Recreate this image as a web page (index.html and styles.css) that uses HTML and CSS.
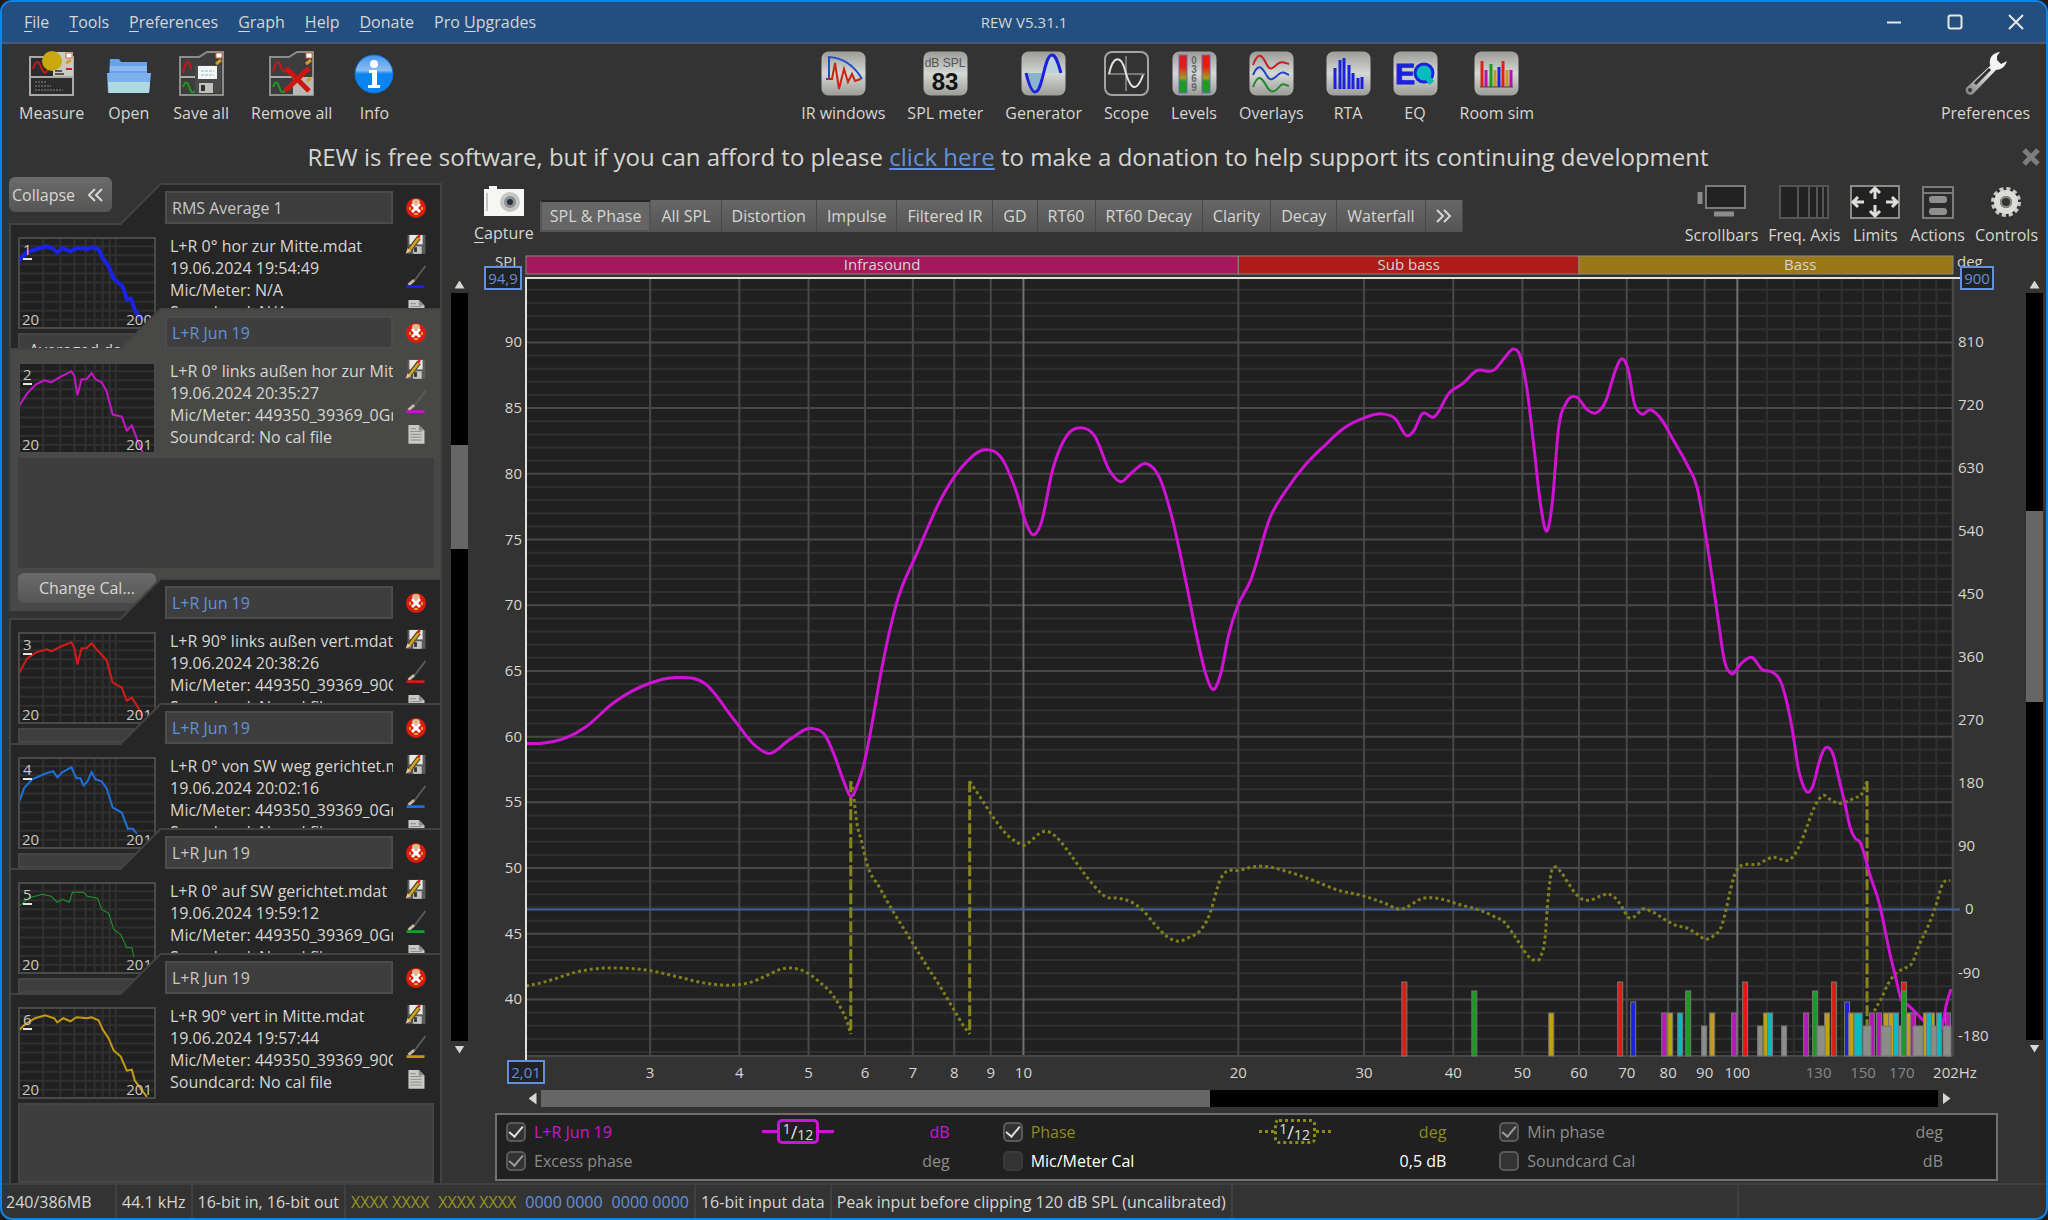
FILE: index.html
```html
<!DOCTYPE html>
<html lang="en">
  <head>
    <meta charset="UTF-8" />
    <meta name="viewport" content="width=device-width, initial-scale=1.0" />
    <title>REW V5.31.1</title>
    <link rel="stylesheet" href="styles.css">
  </head>
  <body>
    <!-- Shared icon shapes -->
    <svg class="defs" aria-hidden="true">
      <defs>
        <linearGradient id="silver" x1="0" y1="0" x2="0" y2="1">
          <stop offset="0" stop-color="#9c9c98" />
          <stop offset="0.5" stop-color="#d4d8d3" />
          <stop offset="1" stop-color="#9c9c98" />
        </linearGradient>
        <linearGradient id="level" x1="0" y1="0" x2="0" y2="1">
          <stop offset="0.3" stop-color="#e31c12" />
          <stop offset="0.6" stop-color="#a89a20" />
          <stop offset="0.7" stop-color="#1f9a20" />
        </linearGradient>
        <linearGradient id="infoBlue" x1="0" y1="0" x2="0" y2="1">
          <stop offset="0" stop-color="#3f95ee" />
          <stop offset="0.4" stop-color="#8fbcf2" />
          <stop offset="0.5" stop-color="#0a84f0" />
        </linearGradient>
        <linearGradient id="metal" x1="1" y1="0" x2="0" y2="1">
          <stop offset="0" stop-color="#ffffff" />
          <stop offset="1" stop-color="#7c7c7a" />
        </linearGradient>
      </defs>
      <symbol id="tile" viewBox="0 0 45 45">
        <rect x="0.5" y="0.5" width="44" height="44" rx="7" fill="url(#silver)" />
      </symbol>
      <symbol id="thumb-grid" viewBox="0 0 137 91">
        <path d="M25 0V91M42 0V91M56 0V91M67 0V91M76 0V91M84 0V91M91 0V91M97 0V91M0 9H137M0 18H137M0 27H137M0 36H137M0 45H137M0 55H137M0 64H137M0 73H137M0 82H137" fill="none" stroke="#303030" stroke-width="2" />
      </symbol>
      <symbol id="i-remove" viewBox="0 0 22 22">
        <circle cx="11" cy="11" r="10" fill="#dc1c12" />
        <ellipse cx="11" cy="5" rx="4" ry="3" fill="#e0b98c" />
        <path d="M9 17h4M5 10v3M17 10v3" stroke="#d8a81c" stroke-width="2" />
        <path d="M7 7l8 8M15 7l-8 8" stroke="#fff" stroke-width="3" />
      </symbol>
      <symbol id="i-save" viewBox="0 0 22 22">
        <rect x="2" y="1" width="19" height="20" fill="#5c5c5c" />
        <rect x="4" y="1" width="14" height="10" fill="#e8e8e6" />
        <rect x="8" y="13" width="9" height="8" fill="#c4c4c2" />
        <rect x="9" y="14" width="3" height="5" fill="#333" />
        <path d="M4 17L14 4" stroke="#3b3b2b" stroke-width="5" />
        <path d="M4 17L14 4" stroke="#d0a01c" stroke-width="3" />
        <path d="M0 21l2-6 4 3z" fill="#e6c49a" />
        <path d="M13 4l2-3" stroke="#d8261c" stroke-width="3" />
      </symbol>
      <symbol id="i-brush" viewBox="0 0 22 26">
        <path d="M21 1L9 17" stroke="#5c5c5c" stroke-width="2" />
        <path d="M9 16l-6 5" stroke="#c8b9a4" stroke-width="3" />
        <path d="M1 23H20" stroke="currentColor" stroke-width="3" />
      </symbol>
      <symbol id="i-file" viewBox="0 0 22 22">
        <path d="M3 1H14L20 7V21H3z" fill="#c9c9c7" />
        <path d="M14 1V7H20" fill="#8c8c8a" />
        <path d="M5 5h6M5 8h12M5 11h12M5 14h12M5 17h12" stroke="#8b8b89" />
      </symbol>
    </svg>

    <div class="window">
      <header class="title-bar">
        <nav class="menu">
          <button type="button"><u>F</u>ile</button>
          <button type="button"><u>T</u>ools</button>
          <button type="button"><u>P</u>references</button>
          <button type="button"><u>G</u>raph</button>
          <button type="button"><u>H</u>elp</button>
          <button type="button"><u>D</u>onate</button>
          <button type="button">Pro <u>U</u>pgrades</button>
        </nav>
        <h1>REW V5.31.1</h1>
        <div class="window-buttons">
          <button type="button" aria-label="Minimise">
            <svg width="16" height="16"><path d="M1 8.5H15" /></svg>
          </button>
          <button type="button" aria-label="Maximise">
            <svg width="16" height="16"><rect x="1.5" y="1.5" width="13" height="13" rx="2" /></svg>
          </button>
          <button type="button" aria-label="Close">
            <svg width="16" height="16"><path d="M1 1L15 15M15 1L1 15" /></svg>
          </button>
        </div>
      </header>

      <div class="toolbar">
        <div class="tool-group">
          <button class="tool" type="button">
            <svg width="45" height="45" viewBox="0 0 45 45">
              <rect x="1" y="6" width="43" height="38" fill="#2b2b2b" stroke="#a9a9a5" stroke-width="2" />
              <path d="M24 1H44V26H24z" fill="#c9c9c5" />
              <path d="M1 26H44" stroke="#a9a9a5" stroke-width="2" />
              <path d="M4 18C7 8 10 10 12 16S17 24 19 18" fill="none" stroke="#c41a1a" stroke-width="2" />
              <circle cx="23" cy="10" r="10" fill="#c9a80f" />
              <rect x="37" y="2" width="6" height="5" fill="#fff" stroke="#c86a50" />
              <path d="M37 12l5-3" stroke="#d0a01c" stroke-width="3" />
              <path d="M37 18h6" stroke="#d01c1c" stroke-width="2" />
              <path d="M26 20h7M26 23h9" stroke="#555" stroke-width="2" />
              <path d="M6 31h11M6 35h16M6 39h28" stroke="#8b8b8b" stroke-dasharray="2 1" />
            </svg>
            <span>Measure</span>
          </button>
          <button class="tool" type="button">
            <svg width="45" height="45" viewBox="0 0 45 45">
              <path d="M4 8H13L15 11H41V26H3z" fill="#66a3ee" />
              <path d="M4 15H41V20H4z" fill="#8fb9ee" />
              <path d="M1 22H45L43 42H2z" fill="#7fb0ee" />
              <path d="M2 31H44L43 42H3z" fill="#aedadf" />
            </svg>
            <span>Open</span>
          </button>
          <button class="tool" type="button">
            <svg width="45" height="45" viewBox="0 0 45 45">
              <path d="M1 6H20L28 1H44V44H1z" fill="#3d3d3d" stroke="#8d8d89" stroke-width="2" />
              <path d="M1 26H22" stroke="#a9a9a5" stroke-width="2" />
              <path d="M4 22C7 8 10 8 12 18" fill="none" stroke="#c41a1a" stroke-width="2" />
              <path d="M4 36C7 28 9 32 11 38S14 40 16 41" fill="none" stroke="#1f9a20" stroke-width="2" />
              <rect x="37" y="2" width="6" height="5" fill="#fff" stroke="#c86a50" />
              <path d="M37 13l5-4" stroke="#d0a01c" stroke-width="3" />
              <rect x="16" y="14" width="26" height="28" rx="2" fill="#4a4a4a" />
              <rect x="19" y="15" width="19" height="13" fill="#f4f6f6" />
              <path d="M22 20h13M22 24h13" stroke="#86b8c0" stroke-dasharray="3 1" />
              <rect x="20" y="32" width="14" height="10" fill="#c0c0bc" />
              <rect x="22" y="34" width="4" height="6" fill="#333" />
            </svg>
            <span>Save all</span>
          </button>
          <button class="tool" type="button">
            <svg width="45" height="45" viewBox="0 0 45 45">
              <path d="M1 6H20L28 1H44V44H1z" fill="#3d3d3d" stroke="#8d8d89" stroke-width="2" />
              <path d="M24 26H44V44H24z" fill="#b9b9b5" />
              <path d="M1 26H24" stroke="#a9a9a5" stroke-width="2" />
              <path d="M4 20C7 8 10 10 12 16S17 22 20 18" fill="none" stroke="#c41a1a" stroke-width="2" />
              <path d="M4 36C7 28 9 32 11 38S15 40 18 38" fill="none" stroke="#1f9a20" stroke-width="2" />
              <rect x="37" y="2" width="6" height="5" fill="#fff" stroke="#c86a50" />
              <path d="M37 13l5-4M38 30l4-3" stroke="#d0a01c" stroke-width="3" />
              <path d="M17 17L40 40M40 17L16 40" stroke="#cc1612" stroke-width="5" />
            </svg>
            <span>Remove all</span>
          </button>
          <button class="tool" type="button">
            <svg width="40" height="45" viewBox="0 0 40 45">
              <ellipse cx="20" cy="23" rx="19" ry="19" fill="url(#infoBlue)" stroke="#0a72d8" />
              <circle cx="20" cy="13" r="4" fill="#fff" />
              <path d="M15 19H23V34H26V37H14V34H18V22H15z" fill="#fff" />
            </svg>
            <span>Info</span>
          </button>
        </div>

        <div class="tool-group">
          <button class="tool" type="button">
            <svg width="45" height="45" viewBox="0 0 45 45">
              <use href="#tile" />
              <path d="M5 28H8V6C24 7 34 16 41 28" fill="none" stroke="#2050c8" stroke-width="2" />
              <path d="M6 28h5L14 12l4 26 5-20 4 13 4-8 3 7 6-2" fill="none" stroke="#cc2414" stroke-width="2" />
            </svg>
            <span>IR windows</span>
          </button>
          <button class="tool" type="button">
            <svg width="45" height="45" viewBox="0 0 45 45">
              <use href="#tile" />
              <text class="meter-unit" x="22" y="16">dB SPL</text>
              <text class="meter-value" x="22" y="39">83</text>
            </svg>
            <span>SPL meter</span>
          </button>
          <button class="tool" type="button">
            <svg width="45" height="45" viewBox="0 0 45 45">
              <use href="#tile" />
              <path d="M5 22H21C17 46 11 46 5 22z" fill="#8ab4cc" />
              <path d="M23 22H40C36 -2 28 -2 23 22z" fill="#bcd2dc" />
              <path d="M5 22C8 34 11 41 14 41C22 41 23 4 31 4C35 4 37 12 40 22" fill="none" stroke="#1a22dc" stroke-width="3" />
            </svg>
            <span>Generator</span>
          </button>
          <button class="tool" type="button">
            <svg width="45" height="45" viewBox="0 0 45 45">
              <rect x="1" y="1" width="43" height="43" rx="7" fill="#333" stroke="#a4a4a0" stroke-width="2" />
              <path d="M4 23H41M22 5V40" stroke="#777" stroke-width="2" />
              <path d="M5 23C9 4 17 4 21 19S31 46 39 24" fill="none" stroke="#e2e2de" stroke-width="2" />
            </svg>
            <span>Scope</span>
          </button>
          <button class="tool" type="button">
            <svg width="45" height="45" viewBox="0 0 45 45">
              <use href="#tile" />
              <rect x="7" y="4" width="8" height="38" fill="url(#level)" stroke="#6a6ac0" />
              <rect x="30" y="4" width="8" height="38" fill="url(#level)" stroke="#6a6ac0" />
              <text class="level-digit" x="22" y="13">0</text>
              <text class="level-digit" x="22" y="22">3</text>
              <text class="level-digit" x="22" y="31">6</text>
              <text class="level-digit" x="22" y="40">9</text>
            </svg>
            <span>Levels</span>
          </button>
          <button class="tool" type="button">
            <svg width="45" height="45" viewBox="0 0 45 45">
              <use href="#tile" />
              <g fill="none" stroke-width="2">
                <path d="M4 14C10 -2 14 6 18 14S26 14 30 12S36 12 40 13" stroke="#c02222" />
                <path d="M4 24C10 10 14 18 18 25S26 26 30 23S36 22 40 24" stroke="#2444c8" />
                <path d="M4 36C10 20 14 29 18 36S26 41 30 36S36 34 40 35" stroke="#1f8a2a" />
              </g>
            </svg>
            <span>Overlays</span>
          </button>
          <button class="tool" type="button">
            <svg width="45" height="45" viewBox="0 0 45 45">
              <use href="#tile" />
              <path d="M9 38V17M14 38V9M18 38V7M23 38V14M27 38V22M32 38V27M36 38V26" stroke="#1a22dc" stroke-width="3" />
            </svg>
            <span>RTA</span>
          </button>
          <button class="tool" type="button">
            <svg width="45" height="45" viewBox="0 0 45 45">
              <use href="#tile" />
              <text class="eq-letter" x="2" y="33">E</text>
              <circle cx="31" cy="22" r="9" fill="#06bcbc" stroke="#1a22dc" stroke-width="3" />
              <path d="M32 24L39 32" stroke="#06bcbc" stroke-width="6" />
            </svg>
            <span>EQ</span>
          </button>
          <button class="tool" type="button">
            <svg width="45" height="45" viewBox="0 0 45 45">
              <use href="#tile" />
              <g stroke-width="3">
                <path d="M8 36V10M29 36V10" stroke="#dc2214" />
                <path d="M12 36V19M37 36V19" stroke="#b012b4" />
                <path d="M17 36V13" stroke="#1f9a20" />
                <path d="M21 36V19M33 36V19" stroke="#c49a1c" />
                <path d="M25 36V16" stroke="#1a22dc" />
              </g>
              <path d="M6 36H39" stroke="#444" />
            </svg>
            <span>Room sim</span>
          </button>
        </div>

        <button class="tool" type="button">
          <svg width="45" height="45" viewBox="0 0 45 45">
            <path d="M28 14L33 19L11 42C8 46 1 43 3 37z" fill="url(#metal)" />
            <path d="M12 33L27 18" stroke="#2e2e2e" stroke-width="3" />
            <circle cx="7" cy="39" r="2" fill="#333" />
            <path d="M37 1C29 2 26 7 27 14L32 19C38 19 42 16 44 10L38 13L34 9L34 5z" fill="#f4f4f2" />
          </svg>
          <span>Preferences</span>
        </button>
      </div>

      <div class="donation">
        <p>REW is free software, but if you can afford to please <a href="#donate">click here</a> to make a donation to help support its continuing development</p>
        <button type="button" aria-label="Dismiss">
          <svg width="18" height="18"><path d="M2 2L16 16M16 2L2 16" stroke="#7d7d7b" stroke-width="5" /></svg>
        </button>
      </div>

      <div class="workspace">
        <aside class="measurements">
          <button class="collapse" type="button">
            Collapse
            <svg width="16" height="14"><path d="M8 1L2 7L8 13M15 1L9 7L15 13" /></svg>
          </button>

          <ul class="card-list">
            <li class="card">
              <input type="text" value="RMS Average 1" aria-label="Measurement 1 name" />
              <button class="remove" type="button" aria-label="Remove"><svg><use href="#i-remove" /></svg></button>
              <div class="thumb blue">
                <svg viewBox="0 0 137 91"><use href="#thumb-grid" /><polyline class="thick" points="1,23 9,15 18,12 28,9 34,11 39,15 44,11 52,14 58,11 66,11 69,12 73,10 80,12 84,21 90,29 95,41 104,49 108,62 112,61 117,75 124,82" /></svg>
                <b>1</b><span>20</span><span>200</span>
              </div>
              <div class="info">
                <p>L+R 0° hor zur Mitte.mdat</p>
                <p>19.06.2024 19:54:49</p>
                <p>Mic/Meter: N/A</p>
                <p>Soundcard: N/A</p>
              </div>
              <div class="card-icons blue">
                <svg><use href="#i-save" /></svg>
                <svg class="brush"><use href="#i-brush" /></svg>
                <svg><use href="#i-file" /></svg>
              </div>
              <div class="notes">Averaged data</div>
            </li>

            <li class="card selected">
              <input class="linked" type="text" value="L+R Jun 19" aria-label="Measurement 2 name" />
              <button class="remove" type="button" aria-label="Remove"><svg><use href="#i-remove" /></svg></button>
              <div class="thumb magenta">
                <svg viewBox="0 0 137 91"><use href="#thumb-grid" /><polyline points="1,44 9,31 18,22 26,18 33,20 41,15 53,9 56,14 59,33 63,17 68,17 73,11 77,17 83,20 88,29 94,52 103,54 108,68 113,63 118,76 124,90" /></svg>
                <b>2</b><span>20</span><span>201</span>
              </div>
              <div class="info">
                <p>L+R 0° links außen hor zur Mitte.mdat</p>
                <p>19.06.2024 20:35:27</p>
                <p>Mic/Meter: 449350_39369_0Grad</p>
                <p>Soundcard: No cal file</p>
              </div>
              <div class="card-icons magenta">
                <svg><use href="#i-save" /></svg>
                <svg class="brush"><use href="#i-brush" /></svg>
                <svg><use href="#i-file" /></svg>
              </div>
              <div class="notes"></div>
              <button class="change-cal" type="button">Change Cal...</button>
            </li>

            <li class="card">
              <input class="linked" type="text" value="L+R Jun 19" aria-label="Measurement 3 name" />
              <button class="remove" type="button" aria-label="Remove"><svg><use href="#i-remove" /></svg></button>
              <div class="thumb red">
                <svg viewBox="0 0 137 91"><use href="#thumb-grid" /><polyline points="1,41 9,26 18,20 29,17 33,19 43,14 53,10 56,16 59,32 63,16 68,16 73,11 78,17 88,28 94,50 103,55 108,68 113,65 120,76 123,83" /></svg>
                <b>3</b><span>20</span><span>201</span>
              </div>
              <div class="info">
                <p>L+R 90° links außen vert.mdat</p>
                <p>19.06.2024 20:38:26</p>
                <p>Mic/Meter: 449350_39369_90Grad</p>
                <p>Soundcard: No cal file</p>
              </div>
              <div class="card-icons red">
                <svg><use href="#i-save" /></svg>
                <svg class="brush"><use href="#i-brush" /></svg>
                <svg><use href="#i-file" /></svg>
              </div>
              <div class="notes"></div>
            </li>

            <li class="card">
              <input class="linked" type="text" value="L+R Jun 19" aria-label="Measurement 4 name" />
              <button class="remove" type="button" aria-label="Remove"><svg><use href="#i-remove" /></svg></button>
              <div class="thumb azure">
                <svg viewBox="0 0 137 91"><use href="#thumb-grid" /><polyline points="1,45 6,31 14,22 28,16 35,14 39,20 44,15 53,10 58,21 62,21 65,28 69,24 73,15 77,22 83,24 88,31 94,50 103,55 109,71 114,71 118,76" /></svg>
                <b>4</b><span>20</span><span>201</span>
              </div>
              <div class="info">
                <p>L+R 0° von SW weg gerichtet.mdat</p>
                <p>19.06.2024 20:02:16</p>
                <p>Mic/Meter: 449350_39369_0Grad</p>
                <p>Soundcard: No cal file</p>
              </div>
              <div class="card-icons azure">
                <svg><use href="#i-save" /></svg>
                <svg class="brush"><use href="#i-brush" /></svg>
                <svg><use href="#i-file" /></svg>
              </div>
              <div class="notes"></div>
            </li>

            <li class="card">
              <input type="text" value="L+R Jun 19" aria-label="Measurement 5 name" />
              <button class="remove" type="button" aria-label="Remove"><svg><use href="#i-remove" /></svg></button>
              <div class="thumb green">
                <svg viewBox="0 0 137 91"><use href="#thumb-grid" /><polyline class="thin" points="1,24 10,16 24,12 33,14 39,20 44,17 51,20 54,10 65,10 69,14 79,16 83,27 90,31 95,47 102,52 108,65 113,65 115,74" /></svg>
                <b>5</b><span>20</span><span>201</span>
              </div>
              <div class="info">
                <p>L+R 0° auf SW gerichtet.mdat</p>
                <p>19.06.2024 19:59:12</p>
                <p>Mic/Meter: 449350_39369_0Grad</p>
                <p>Soundcard: No cal file</p>
              </div>
              <div class="card-icons green">
                <svg><use href="#i-save" /></svg>
                <svg class="brush"><use href="#i-brush" /></svg>
                <svg><use href="#i-file" /></svg>
              </div>
              <div class="notes"></div>
            </li>

            <li class="card last">
              <input type="text" value="L+R Jun 19" aria-label="Measurement 6 name" />
              <button class="remove" type="button" aria-label="Remove"><svg><use href="#i-remove" /></svg></button>
              <div class="thumb yellow">
                <svg viewBox="0 0 137 91"><use href="#thumb-grid" /><polyline points="1,23 7,17 17,11 27,8 36,11 39,15 45,11 52,14 58,10 69,11 73,10 80,13 84,22 90,31 95,43 102,49 108,63 113,62 116,73 128,89" /></svg>
                <b>6</b><span>20</span><span>201</span>
              </div>
              <div class="info">
                <p>L+R 90° vert in Mitte.mdat</p>
                <p>19.06.2024 19:57:44</p>
                <p>Mic/Meter: 449350_39369_90Grad</p>
                <p>Soundcard: No cal file</p>
              </div>
              <div class="card-icons yellow">
                <svg><use href="#i-save" /></svg>
                <svg class="brush"><use href="#i-brush" /></svg>
                <svg><use href="#i-file" /></svg>
              </div>
              <div class="notes"></div>
            </li>
          </ul>
        </aside>

        <div class="scrollbar list-scroll">
          <button type="button" aria-label="Scroll list up"><i class="arrow up"></i></button>
          <div class="track">
            <div style="flex-grow: 152"></div>
            <div class="handle" style="flex-grow: 104"></div>
            <div style="flex-grow: 492"></div>
          </div>
          <button type="button" aria-label="Scroll list down"><i class="arrow down"></i></button>
        </div>

        <main class="graph">
          <div class="graph-header">
            <button class="tool capture" type="button">
              <svg width="42" height="32" viewBox="0 0 42 32">
                <path d="M1 4H6V1H14V4H41V31H1z" fill="#f6f6f4" />
                <path d="M4 8V26" stroke="#c4c4c2" stroke-width="2" />
                <circle cx="27" cy="17" r="10" fill="#c6c6c4" />
                <circle cx="27" cy="17" r="6" fill="#8b8f92" />
                <circle cx="27" cy="17" r="3" fill="#26303a" />
              </svg>
              <span><u>C</u>apture</span>
            </button>
            <div class="tabs">
              <button class="active" type="button">SPL &amp; Phase</button>
              <button type="button">All SPL</button>
              <button type="button">Distortion</button>
              <button type="button">Impulse</button>
              <button type="button">Filtered IR</button>
              <button type="button">GD</button>
              <button type="button">RT60</button>
              <button type="button">RT60 Decay</button>
              <button type="button">Clarity</button>
              <button type="button">Decay</button>
              <button type="button">Waterfall</button>
              <button type="button" aria-label="More graphs">
                <svg width="16" height="14"><path d="M1 1L7 7L1 13M8 1L14 7L8 13" /></svg>
              </button>
            </div>
            <div class="graph-tools">
              <button class="tool" type="button">
                <svg width="50" height="34" viewBox="0 0 50 34">
                  <rect x="9" y="1" width="39" height="22" fill="#222" stroke="#7b7b79" stroke-width="2" />
                  <path d="M3 7V19M17 29H37" stroke="#8b8b89" stroke-width="5" />
                </svg>
                <span>Scrollbars</span>
              </button>
              <button class="tool" type="button">
                <svg width="50" height="34" viewBox="0 0 50 34">
                  <rect x="1" y="1" width="48" height="32" fill="#222" stroke="#555" stroke-width="2" />
                  <path d="M19 1V33M30 1V33M38 1V33M44 1V33" stroke="#555" stroke-width="2" />
                </svg>
                <span>Freq. Axis</span>
              </button>
              <button class="tool" type="button">
                <svg width="50" height="34" viewBox="0 0 50 34">
                  <rect x="1" y="1" width="48" height="32" fill="#222" stroke="#8b8b89" stroke-width="2" />
                  <path d="M25 14V4M20 8L25 3L30 8M25 20V30M20 26L25 31L30 26M14 17H4M8 12L3 17L8 22M36 17H46M42 12L47 17L42 22" fill="none" stroke="#dededa" stroke-width="3" />
                </svg>
                <span>Limits</span>
              </button>
              <button class="tool" type="button">
                <svg width="32" height="34" viewBox="0 0 32 34">
                  <rect x="1" y="2" width="30" height="31" fill="#2b2b2b" stroke="#7b7b79" stroke-width="2" />
                  <path d="M1 8H31" stroke="#7b7b79" stroke-width="2" />
                  <rect x="7" y="11" width="18" height="7" rx="3" fill="#8f8f8d" />
                  <rect x="7" y="23" width="18" height="7" rx="3" fill="#8f8f8d" />
                </svg>
                <span>Actions</span>
              </button>
              <button class="tool" type="button">
                <svg width="34" height="34" viewBox="0 0 34 34">
                  <circle cx="17" cy="17" r="13" fill="none" stroke="#c9c9c5" stroke-width="4" stroke-dasharray="4 2.8" />
                  <circle cx="17" cy="17" r="9" fill="none" stroke="#dcdcd8" stroke-width="6" />
                  <circle cx="17" cy="17" r="5" fill="#333" stroke="#8b8b89" stroke-width="2" />
                </svg>
                <span>Controls</span>
              </button>
            </div>
          </div>

          <div class="plot-row">
            <svg id="plot" role="img" aria-label="SPL and phase against frequency"></svg>
            <div class="scrollbar plot-scroll">
              <button type="button" aria-label="Scroll graph up"><i class="arrow up"></i></button>
              <div class="track">
                <div style="flex-grow: 218"></div>
                <div class="handle" style="flex-grow: 191"></div>
                <div style="flex-grow: 338"></div>
              </div>
              <button type="button" aria-label="Scroll graph down"><i class="arrow down"></i></button>
            </div>
          </div>

          <div class="scrollbar horizontal">
            <button type="button" aria-label="Scroll graph left"><i class="arrow left"></i></button>
            <div class="track">
              <div class="handle" style="flex-grow: 669"></div>
              <div style="flex-grow: 728"></div>
            </div>
            <button type="button" aria-label="Scroll graph right"><i class="arrow right"></i></button>
          </div>

          <div class="legend">
            <div class="legend-item spl">
              <label><input type="checkbox" checked /> L+R Jun 19</label>
              <span class="smoothing"><span><sup>1</sup>/<sub>12</sub></span></span>
              <span class="unit">dB</span>
            </div>
            <div class="legend-item phase">
              <label><input type="checkbox" checked /> Phase</label>
              <span class="smoothing"><span><sup>1</sup>/<sub>12</sub></span></span>
              <span class="unit">deg</span>
            </div>
            <div class="legend-item off">
              <label><input type="checkbox" checked /> Min phase</label>
              <span class="unit">deg</span>
            </div>
            <div class="legend-item off">
              <label><input type="checkbox" checked /> Excess phase</label>
              <span class="unit">deg</span>
            </div>
            <div class="legend-item">
              <label><input class="plain" type="checkbox" /> Mic/Meter Cal</label>
              <span class="unit">0,5 dB</span>
            </div>
            <div class="legend-item off">
              <label><input type="checkbox" /> Soundcard Cal</label>
              <span class="unit">dB</span>
            </div>
          </div>
        </main>
      </div>

      <footer class="status">
        <span class="memory">240/386MB</span>
        <span>44.1 kHz</span>
        <span>16-bit in, 16-bit out</span>
        <span class="bits"><em>XXXX XXXX</em><em>XXXX XXXX</em><strong>0000 0000</strong><strong>0000 0000</strong></span>
        <span>16-bit input data</span>
        <span>Peak input before clipping 120 dB SPL (uncalibrated)</span>
        <span class="wide"></span>
        <span class="rest"></span>
      </footer>
    </div>

    <script src="script.js"></script>
  </body>
</html>
```
FILE: styles.css
```css
* {
  box-sizing: border-box;
}

body {
  margin: 0;
  background-color: #1c1c1c;
  color: #d6d6d2;
  font-family: "Open Sans", "Noto Sans", sans-serif;
  font-size: 16px;
  line-height: 22px;
}

button {
  margin: 0;
  padding: 0;
  border: none;
  background: none;
  color: inherit;
  font: inherit;
  cursor: pointer;
}

u {
  text-underline-offset: 3px;
}

p,
ul,
h1 {
  margin: 0;
  padding: 0;
}

.defs {
  position: absolute;
  width: 0;
  height: 0;
}

.window {
  display: flex;
  flex-direction: column;
  height: 100vh;
  border: 2px solid #0d84e6;
  border-radius: 12px;
  background-color: #333;
  overflow: hidden;
}

/* Title bar */

.title-bar {
  display: grid;
  grid-template-columns: 1fr auto 1fr;
  align-items: center;
  height: 42px;
  flex: none;
  background-color: #234f80;
  border-bottom: 2px solid #46587a;
}

.menu {
  display: flex;
  gap: 20px;
  padding-left: 22px;
}

.title-bar h1 {
  font-size: 15px;
  font-weight: normal;
}

.window-buttons {
  display: flex;
  justify-content: flex-end;
}

.window-buttons button {
  display: flex;
  justify-content: center;
  width: 61px;
}

.window-buttons svg {
  fill: none;
  stroke: #e8e8e4;
  stroke-width: 2;
}

/* Toolbar */

.toolbar {
  display: flex;
  justify-content: space-between;
  flex: none;
  height: 87px;
  padding: 7px 16px 0 17px;
}

.tool-group {
  display: flex;
  gap: 22px;
}

.tool {
  display: flex;
  flex-direction: column;
  align-items: center;
  gap: 6px;
}

.tool svg {
  flex: none;
}

.meter-unit {
  font: 12px "Liberation Sans", sans-serif;
  fill: #555;
  text-anchor: middle;
}

.meter-value {
  font: bold 24px "Liberation Sans", sans-serif;
  fill: #111;
  text-anchor: middle;
}

.level-digit {
  font: bold 10px "Liberation Sans", sans-serif;
  fill: #666;
  text-anchor: middle;
}

.eq-letter {
  font: bold 30px "Liberation Sans", sans-serif;
  fill: #1a22dc;
  stroke: #1a22dc;
  stroke-width: 1;
}

.donation {
  display: flex;
  align-items: center;
  flex: none;
  height: 46px;
  padding: 6px 6px 0 0;
}

.donation p {
  flex: 1;
  padding-right: 8px;
  text-align: center;
  font-size: 24px;
  line-height: 36px;
}

.donation a {
  color: #6191dc;
}

.donation button {
  display: flex;
}

/* Workspace */

.workspace {
  display: flex;
  flex: 1;
  min-height: 0;
  padding: 0 3px 0 7px;
}

.measurements {
  display: flex;
  flex-direction: column;
  width: 433px;
  min-height: 0;
}

.collapse {
  position: relative;
  z-index: 1;
  display: flex;
  align-items: center;
  gap: 12px;
  flex: none;
  width: 103px;
  height: 35px;
  padding-left: 3px;
  border-radius: 6px;
  background: linear-gradient(#6b6b6b, #555);
}

.collapse svg,
.tabs svg {
  fill: none;
  stroke: #d6d6d2;
  stroke-width: 2;
}

.card-list {
  display: flex;
  flex-direction: column;
  flex: 1;
  min-height: 0;
  margin-top: -29px;
  list-style: none;
}

/* Tabbed card: every card overlaps the one above it */
.card {
  position: relative;
  display: grid;
  grid-template-columns: 147px 228px 1fr;
  grid-template-rows: 33px 91px 1fr;
  row-gap: 5px;
  flex: none;
  height: 165px;
  margin-bottom: -40px;
  padding: 8px 8px 0 9px;
  background-color: #424242;
  clip-path: polygon(0 40px, 111px 40px, 151px 0, 100% 0, 100% 100%, 0 100%);
}

.card::before {
  content: "";
  position: absolute;
  inset: 2px 2px 0 2px;
  background-color: #262626;
  clip-path: polygon(0 40px, 110px 40px, 150px 0, 100% 0, 100% 100%, 0 100%);
}

.card > * {
  position: relative;
}

.card.selected {
  grid-template-rows: 33px 91px 118px 30px;
  height: 303px;
  margin-bottom: -33px;
}

.card.selected::before {
  background-color: #484846;
}

.card.last {
  flex: 1;
  margin-bottom: 0;
}

.card input {
  grid-column: 2;
  min-width: 0;
  padding: 0 5px;
  border: 2px solid #4c4c4c;
  background-color: #3e3e3e;
  color: #c8c8c4;
  font: inherit;
}

.card input.linked {
  color: #6191dc;
}

.remove {
  display: flex;
  align-items: center;
  justify-content: center;
  padding-left: 5px;
}

.remove svg,
.card-icons svg {
  width: 22px;
  height: 22px;
}

.thumb {
  grid-column: 1;
  width: 138px;
  margin-top: 8px;
  height: 92px;
  outline: 2px solid #4a4a4a;
  outline-offset: -2px;
  background-color: #202020;
  overflow: hidden;
}

.thumb svg {
  display: block;
  width: 100%;
  height: 100%;
}

.thumb polyline {
  fill: none;
  stroke: currentColor;
  stroke-width: 2;
}

.thumb .thick {
  stroke-width: 4;
}

.thumb .thin {
  stroke-width: 1;
}

.thumb b,
.thumb span {
  position: absolute;
  color: #c8c8c4;
  font-size: 15px;
  font-weight: normal;
  line-height: 17px;
}

.thumb b {
  top: 4px;
  left: 5px;
  border-bottom: 2px solid #e4e4e0;
}

.thumb span {
  left: 4px;
  bottom: 1px;
}

.thumb span:last-child {
  left: auto;
  right: 4px;
}

.info {
  padding: 6px 0 0 5px;
  height: 96px;
  overflow: hidden;
  white-space: nowrap;
}

.card-icons {
  display: flex;
  flex-direction: column;
  align-items: center;
  gap: 10px;
  padding: 5px 0 0 5px;
}

.card-icons .brush {
  height: 26px;
}

.notes {
  grid-column: 1 / -1;
  margin-top: 8px;
  padding: 4px 9px;
  border: 2px solid #454545;
  background-color: #3e3e3e;
}

.selected .notes {
  border-color: #3e3e3e;
}

.change-cal {
  width: 138px;
  height: 30px;
  border-radius: 6px;
  background: linear-gradient(#6b6b6b, #555);
}

.blue {
  color: #1a22e4;
}

.magenta {
  color: #c416c8;
}

.red {
  color: #d01c16;
}

.azure {
  color: #1c70d8;
}

.green {
  color: #1f9a2a;
}

.yellow {
  color: #c49a12;
}

/* Scrollbars */

.scrollbar {
  display: flex;
  flex-direction: column;
  flex: none;
  width: 17px;
}

.scrollbar button {
  display: flex;
  align-items: center;
  justify-content: center;
  width: 17px;
  height: 17px;
}

.list-scroll {
  margin: 99px 8px 125px 9px;
}

.plot-scroll {
  margin: 24px 0 29px;
}

.track {
  display: flex;
  flex-direction: inherit;
  flex: 1;
  background-color: #000;
}

.handle {
  background-color: #666;
}

.arrow {
  width: 10px;
  height: 8px;
  background-color: #d6d6d2;
}

.up {
  clip-path: polygon(50% 0, 100% 100%, 0 100%);
}

.down {
  clip-path: polygon(0 0, 100% 0, 50% 100%);
}

.left,
.right {
  width: 8px;
  height: 12px;
}

.left {
  clip-path: polygon(0 50%, 100% 0, 100% 100%);
}

.right {
  clip-path: polygon(0 0, 100% 50%, 0 100%);
}

.horizontal {
  flex-direction: row;
  width: auto;
  height: 17px;
  margin: 4px 88px 6px 48px;
}

/* Graph */

.graph {
  display: flex;
  flex-direction: column;
  flex: 1;
  min-width: 0;
  min-height: 0;
}

.graph-header {
  display: flex;
  flex: none;
  height: 75px;
  padding: 8px 5px 0 0;
}

.capture {
  margin: 0 6px 0 -2px;
}

.tabs {
  display: flex;
  height: 32px;
  margin-top: 15px;
}

.tabs button {
  display: flex;
  align-items: center;
  padding: 0 10px;
  border-right: 1px solid #484848;
  background: linear-gradient(#676767, #545454);
}

.tabs button.active {
  padding: 0 8px;
  border: 2px solid #555;
  border-top-color: #222;
  background: #666;
}

.graph-tools {
  display: flex;
  gap: 10px;
  margin-left: auto;
}

.graph-tools .tool,
.graph-header .capture {
  gap: 5px;
}

.plot-row {
  display: flex;
  gap: 7px;
  flex: 1;
  min-height: 0;
}

#plot {
  flex: 1;
  min-width: 0;
  height: 100%;
}

#plot text {
  fill: #d6d6d2;
  font-size: 15px;
}

#plot .end {
  text-anchor: end;
}

#plot .middle {
  text-anchor: middle;
}

#plot .dim {
  fill: #888;
}

#plot .limit-text {
  fill: #6191dc;
}

.limit-box {
  fill: #222;
  stroke: #6191dc;
  stroke-width: 2;
}

.plot-area {
  fill: #202020;
}

.grid-minor {
  stroke: #303030;
  stroke-width: 2;
}

.grid-major {
  stroke: #484848;
  stroke-width: 2;
}

.grid-decade {
  stroke: #707070;
  stroke-width: 2;
}

.zero {
  stroke: #40609c;
  stroke-width: 2;
}

.axis {
  fill: none;
  stroke: #e0e0dc;
  stroke-width: 2;
}

.band {
  stroke: #8a8a80;
}

.trace {
  fill: none;
  stroke: #d012d4;
  stroke-width: 3;
  stroke-linejoin: round;
}

.phase-trace {
  fill: none;
  stroke: #7f7f1c;
  stroke-width: 3;
  stroke-dasharray: 3 3;
}

.phase-wrap {
  stroke: #86861a;
  stroke-width: 3;
  stroke-dasharray: 11 3;
}

.mode {
  stroke: #777;
}

/* Legend */

.legend {
  display: grid;
  grid-template-columns: repeat(3, 1fr);
  grid-template-rows: 29px 29px;
  flex: none;
  margin: 0 45px 2px 19px;
  padding: 2px 0 4px 9px;
  border: 2px solid #707070;
  background-color: #202020;
}

.legend-item {
  display: grid;
  grid-template-columns: 256px 72px 1fr;
  align-items: center;
  padding-right: 53px;
  color: #fff;
}

.legend-item label {
  display: flex;
  align-items: center;
  gap: 8px;
}

.legend-item input {
  appearance: none;
  display: grid;
  place-content: center;
  width: 20px;
  height: 20px;
  margin: 0;
  border: 2px solid #5a5a5a;
  border-radius: 5px;
  background-color: #333;
}

.legend-item .plain {
  border-color: #3a3a3a;
}

.legend-item input:checked::after {
  content: "";
  width: 6px;
  height: 12px;
  margin-bottom: 3px;
  border: solid #e0e0dc;
  border-width: 0 2px 2px 0;
  transform: rotate(40deg);
}

.spl {
  color: #d012d4;
}

.phase {
  color: #8c8c1e;
}

.off {
  color: #8c8c8c;
}

.legend-item.off input:checked::after {
  border-color: #9c9c9c;
}

.unit {
  grid-column: 3;
  text-align: right;
}

.smoothing {
  display: flex;
  align-items: center;
}

.smoothing::before,
.smoothing::after {
  content: "";
  flex: 1;
  border-top: 3px solid;
}

.smoothing span {
  display: flex;
  align-items: center;
  justify-content: center;
  width: 42px;
  height: 25px;
  border: 3px solid #d012d4;
  border-radius: 5px;
  color: #e0e0dc;
  font-size: 18px;
}

.phase .smoothing span {
  border-color: #8c8c1e;
}

.phase .smoothing::before,
.phase .smoothing::after,
.phase .smoothing span {
  border-style: dotted;
}

.phase .smoothing::before,
.phase .smoothing::after {
  border-width: 3px 0 0;
}

.smoothing sup,
.smoothing sub {
  font-size: 14px;
  line-height: 14px;
  vertical-align: baseline;
}

.smoothing sup {
  padding-bottom: 5px;
}

.smoothing sub {
  padding-top: 6px;
}

/* Status bar */

.status {
  display: flex;
  flex: none;
  height: 35px;
  border-top: 2px solid #404040;
  white-space: nowrap;
}

.status > span {
  padding: 6px 5px 0;
  border-right: 2px solid #404040;
}

.status .memory {
  width: 115px;
  padding-left: 4px;
}

.bits {
  display: flex;
  gap: 9px;
}

.bits em {
  color: #96961e;
  font-style: normal;
}

.bits strong {
  color: #6191dc;
  font-weight: normal;
}

.status .wide {
  flex: 5;
}

.status .rest {
  flex: 3;
  border-right: none;
}
```
FILE: script.js
```js
const svg = document.getElementById("plot");

// Axis limits
const FREQ = { min: 2.01, max: 200.5 };
const SPL = { min: 35.7, max: 94.9 };
const ZERO_DEG = 46.85; // SPL level that lines up with 0 degrees
const DB_PER_DEG = 0.0533;

// Recorded traces, as points on a 2048px wide screen
const AREA = { left: 526, top: 278, width: 1428, height: 779 };

const splTrace = [
  526,744, 540,744, 567,738, 585,728, 614,703, 649,684, 676,678, 705,684, 734,720, 755,746,
  769,754, 790,740, 812,729, 826,737, 835,757, 844,782, 851,797, 859,782, 866,757, 873,720,
  882,669, 897,603, 917,554, 943,496, 966,463, 985,450, 1003,460, 1016,490, 1027,525,
  1033,535, 1041,525, 1053,470, 1067,436, 1081,428, 1095,436, 1110,471, 1121,482, 1132,473,
  1147,464, 1160,478, 1172,516, 1186,580, 1199,645, 1207,677, 1213,690, 1221,675, 1229,636,
  1238,607, 1251,581, 1271,517, 1287,490, 1306,465, 1326,445, 1345,428, 1365,418, 1382,414,
  1396,419, 1408,436, 1415,430, 1422,415, 1435,417, 1450,393, 1463,384, 1477,371, 1495,370,
  1506,357, 1514,349, 1520,354, 1527,385, 1535,450, 1541,503, 1548,531, 1553,503, 1559,431,
  1567,403, 1577,397, 1588,410, 1597,413, 1607,400, 1616,371, 1622,359, 1629,370, 1635,403,
  1642,414, 1651,410, 1661,418, 1674,440, 1688,465, 1698,488, 1707,538, 1719,620, 1725,660,
  1732,674, 1742,664, 1753,658, 1763,670, 1774,673, 1782,683, 1787,700, 1794,735, 1799,768,
  1804,786, 1809,793, 1814,786, 1820,763, 1825,750, 1829,748, 1834,755, 1840,780, 1846,805,
  1851,828, 1856,839, 1861,843, 1865,854, 1871,876, 1879,900, 1884,921, 1889,946, 1897,980,
  1902,1000, 1909,1006, 1924,1021, 1935,1032, 1944,1024, 1947,1007, 1952,990,
];

const phaseTraces = [
  [
    526,987, 540,984, 554,980, 576,973, 603,969, 620,969, 647,971, 679,978, 705,984, 732,986,
    748,984, 768,976, 781,970, 792,969, 808,974, 821,984, 833,996, 841,1009, 847,1022, 851,1035,
  ],
  [
    851,782, 853,790, 857,823, 862,843, 868,867, 879,887, 892,910, 908,936, 924,962, 942,990,
    955,1012, 964,1027, 970,1035,
  ],
  [
    970,782, 982,800, 995,820, 1009,837, 1016,842, 1024,846, 1033,840, 1040,834, 1047,832,
    1056,837, 1067,850, 1080,868, 1094,886, 1107,898, 1118,899, 1130,902, 1143,911, 1156,926,
    1167,937, 1178,942, 1190,938, 1200,932, 1209,918, 1221,880, 1241,871, 1260,867, 1287,872,
    1313,881, 1339,891, 1365,897, 1385,904, 1400,910, 1424,899, 1443,900, 1459,905, 1483,912,
    1494,917, 1505,923, 1514,935, 1522,947, 1529,957, 1535,961, 1542,956, 1546,937, 1548,909,
    1550,887, 1552,873, 1555,868, 1561,872, 1569,884, 1576,894, 1583,900, 1590,901, 1601,897,
    1610,895, 1618,901, 1624,910, 1629,918, 1636,917, 1643,910, 1652,912, 1665,920, 1676,926,
    1688,929, 1697,934, 1706,940, 1714,937, 1723,925, 1727,910, 1731,892, 1735,877, 1740,868,
    1748,865, 1759,865, 1766,861, 1774,858, 1782,860, 1789,861, 1795,856, 1801,845, 1808,827,
    1813,813, 1819,801, 1824,796, 1831,800, 1839,804, 1848,802, 1857,798, 1862,796, 1865,789,
    1868,782,
  ],
  [
    1868,1035, 1875,1013, 1882,1000, 1889,985, 1897,974, 1906,969, 1913,964, 1920,946, 1929,927,
    1936,909, 1944,884, 1951,881,
  ],
];

const phaseWraps = [851, 970, 1868];

// Room modes: position, height, colour, width
const RED = "#e01c12";
const GREEN = "#1c9a20";
const BLUE = "#1a22dc";
const GOLD = "#c4a010";
const MAGENTA = "#bc12c0";
const CYAN = "#06bcc0";
const GREY = "#8c8c88";
const modes = [
  [1405, 74, RED], [1475, 65, GREEN], [1552, 43, GOLD], [1621, 74, RED], [1634, 54, BLUE],
  [1665, 43, MAGENTA], [1671, 43, GOLD], [1681, 43, CYAN], [1689, 65, GREEN], [1705, 30, GREY],
  [1713, 43, GOLD], [1735, 43, MAGENTA], [1746, 74, RED], [1761, 30, GREY], [1767, 43, GOLD],
  [1771, 43, CYAN], [1785, 30, GREY], [1807, 43, MAGENTA], [1816, 65, GREEN], [1828, 43, GOLD],
  [1822, 30, GREY, 8], [1835, 74, RED], [1848, 54, BLUE], [1852, 43, GOLD], [1859, 43, CYAN, 8],
  [1873, 43, MAGENTA], [1880, 43, MAGENTA], [1868, 30, GREY, 8], [1887, 43, GOLD],
  [1892, 43, GOLD], [1887, 30, GREY, 10], [1897, 43, CYAN], [1902, 30, GREY], [1905, 74, RED],
  [1905, 65, GREEN], [1910, 43, GOLD], [1914, 43, MAGENTA], [1919, 30, GREY, 10],
  [1927, 43, GOLD], [1933, 43, GOLD], [1930, 43, CYAN], [1936, 30, GREY, 8], [1940, 43, CYAN],
  [1949, 43, MAGENTA], [1948, 30, GREY, 8],
];

function add(name, attrs, text) {
  const el = document.createElementNS("http://www.w3.org/2000/svg", name);
  for (const key in attrs) {
    el.setAttribute(key, attrs[key]);
  }
  if (text !== undefined) {
    el.textContent = text;
  }
  svg.appendChild(el);
}

function draw() {
  const width = svg.clientWidth;
  const height = svg.clientHeight;
  const left = 50;
  const top = 26;
  const right = width - 66;
  const bottom = height - 30;

  svg.textContent = "";

  const x = (f) =>
    left + ((right - left) * Math.log(f / FREQ.min)) / Math.log(FREQ.max / FREQ.min);
  const y = (db) => top + ((bottom - top) * (SPL.max - db)) / (SPL.max - SPL.min);
  const deg = (d) => y(ZERO_DEG + d * DB_PER_DEG);
  const sx = (px) => left + ((px - AREA.left) * (right - left)) / AREA.width;
  const sy = (px) => top + ((px - AREA.top) * (bottom - top)) / AREA.height;

  const line = (cls, x1, y1, x2, y2) => add("line", { class: cls, x1, y1, x2, y2 });

  // Smooth path through the points, x always increases
  const path = (cls, flat) => {
    const pts = [];
    for (let i = 0; i < flat.length; i += 2) {
      pts.push([sx(flat[i]), sy(flat[i + 1])]);
    }
    const step = (i) => pts[i + 1][0] - pts[i][0];
    const rise = (i) => (pts[i + 1][1] - pts[i][1]) / step(i);
    const last = pts.length - 1;
    const slope = (i) => {
      if (i === 0) return rise(0);
      if (i === last) return rise(last - 1);
      return (rise(i - 1) * step(i) + rise(i) * step(i - 1)) / (step(i) + step(i - 1));
    };
    let d = `M${pts[0]}`;
    for (let i = 0; i < last; i++) {
      const h = step(i) / 3;
      const [x1, y1] = pts[i];
      const [x2, y2] = pts[i + 1];
      d += `C${x1 + h},${y1 + h * slope(i)} ${x2 - h},${y2 - h * slope(i + 1)} ${x2},${y2}`;
    }
    add("path", { class: cls, d });
  };

  // Frequency bands, the last one runs on past the right edge
  const bands = [
    ["Infrasound", FREQ.min, 20, "#a4195c"],
    ["Sub bass", 20, 60, "#ae1b19"],
    ["Bass", 60, 250, "#9a7815"],
  ];
  bands.forEach(([name, from, to, fill]) => {
    const end = Math.min(x(to), right);
    add("rect", { class: "band", x: x(from), y: 4, width: end - x(from), height: 18, fill });
    add("text", { class: "middle", x: (x(from) + x(to)) / 2, y: 18 }, name);
  });

  // Grid
  add("rect", { class: "plot-area", x: left, y: top, width: right - left, height: bottom - top });
  for (let db = 36; db < 95; db++) {
    if (db % 5) {
      line("grid-minor", left, y(db), right, y(db));
    }
  }
  for (let f = 110; f <= 200; f += 10) {
    line("grid-minor", x(f), top, x(f), bottom);
  }
  for (let db = 40; db < 95; db += 5) {
    line("grid-major", left, y(db), right, y(db));
    add("text", { class: "end", x: left - 4, y: y(db) + 5 }, db);
  }
  for (let f = 3; f < 100; f += f < 10 ? 1 : 10) {
    line(f === 10 ? "grid-decade" : "grid-major", x(f), top, x(f), bottom);
    add("text", { class: "middle", x: x(f), y: bottom + 22 }, f);
  }
  line("grid-decade", x(100), top, x(100), bottom);
  add("text", { class: "middle", x: x(100), y: bottom + 22 }, 100);
  [130, 150, 170].forEach((f) => {
    add("text", { class: "middle dim", x: x(f), y: bottom + 22 }, f);
  });
  add("text", { class: "middle", x: right + 2, y: bottom + 22 }, "202Hz");

  for (let d = -180; d < 900; d += 90) {
    add("text", { x: d === 0 ? right + 12 : right + 5, y: deg(d) + 5 }, d);
  }
  line("grid-major", left, bottom, right, bottom);
  line("grid-major", right, top, right, bottom);
  line("zero", left, deg(0), right + 7, deg(0));

  // Traces
  phaseTraces.forEach((trace) => path("phase-trace", trace));
  phaseWraps.forEach((px) => line("phase-wrap", sx(px), sy(782), sx(px), sy(1035)));
  path("trace", splTrace);

  modes.forEach(([px, h, fill, w = 5]) => {
    add("rect", { class: "mode", x: sx(px) - w / 2, y: bottom - h, width: w, height: h, fill });
  });

  add("path", { class: "axis", d: `M${left} ${bottom + 4}V${top}H${right + 8}` });

  // Editable limits in the corners
  add("text", { class: "end", x: left - 6, y: 15 }, "SPL");
  add("text", { x: right + 4, y: 15 }, "deg");
  [
    [left - 41, 15, 36, "94,9"],
    [right + 8, 15, 32, "900"],
    [left - 18, bottom + 5, 36, "2,01"],
  ].forEach(([bx, by, w, label]) => {
    add("rect", { class: "limit-box", x: bx, y: by, width: w, height: 22 });
    add("text", { class: "middle limit-text", x: bx + w / 2, y: by + 17 }, label);
  });
}

draw();
window.addEventListener("resize", draw);
```
